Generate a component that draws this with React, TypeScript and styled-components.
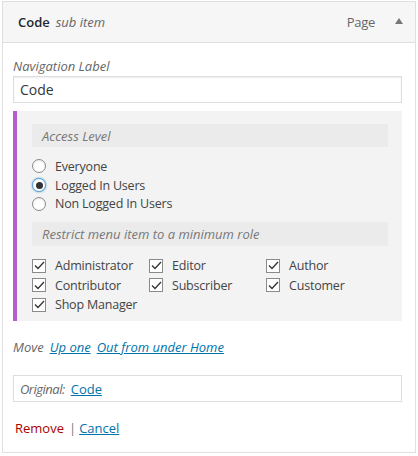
import React from "react";
import styled, { createGlobalStyle } from "styled-components";

const Global = createGlobalStyle`
  html, body { margin: 0; padding: 0; background: #fff; }
  body { font-family: "Open Sans", "Noto Sans", sans-serif; font-size: 13px; color: #444; }
  * { box-sizing: border-box; }
`;

const Page = styled.div`
  padding: 1px 0 0 2px;
  width: 418px;
`;

const Item = styled.div`
  width: 414px;
`;

const Handle = styled.div`
  height: 42px;
  border: 1px solid #dfdfdf;
  background: #f6f6f6;
  display: flex;
  align-items: center;
  padding: 0 12px 0 15px;
`;

const Title = styled.span`
  font-weight: 600;
  color: #23282d;
  font-size: 13px;
`;

const SubTitle = styled.span`
  font-style: italic;
  color: #666;
  margin-left: 6px;
  font-size: 13px;
`;

const TypeLabel = styled.span`
  margin-left: auto;
  color: #666;
  font-size: 13px;
  letter-spacing: -0.3px;
`;

const Arrow = styled.span`
  margin-left: 20px;
  width: 0;
  height: 0;
  border-left: 4px solid transparent;
  border-right: 4px solid transparent;
  border-bottom: 6px solid #777;
  margin-top: -3px;
`;

const Settings = styled.div`
  border: 1px solid #dfdfdf;
  border-top: none;
  padding: 13px 12px 14px 10px;
`;

const FieldLabel = styled.div`
  font-style: italic;
  color: #666;
  line-height: 20px;
  height: 20px;
`;

const TextInput = styled.input`
  display: block;
  width: 389px;
  height: 27px;
  border: 1px solid #ddd;
  box-shadow: inset 0 1px 2px rgba(0,0,0,0.07);
  padding: 0 6px;
  font-family: "Open Sans", sans-serif;
  font-size: 14px;
  color: #32373c;
  outline: none;
`;

const Panel = styled.div`
  margin-top: 8px;
  width: 389px;
  border-left: 4px solid #b25fce;
  background: #f3f3f3;
  padding: 13px 14px 6.5px 15px;
`;

const Bar = styled.div<{ $h: number; $gap?: number }>`
  height: ${(p) => p.$h}px;
  margin-top: ${(p) => p.$gap ?? 0}px;
  background: #ebebeb;
  font-style: italic;
  color: #777;
  display: flex;
  align-items: center;
  padding-left: 10px;
`;

const List = styled.div<{ $cols: number }>`
  margin-top: 10px;
  display: grid;
  grid-template-columns: ${(p) => (p.$cols > 1 ? `repeat(${p.$cols}, 117px)` : "1fr")};
  grid-auto-rows: ${(p) => (p.$cols > 1 ? "19.5px" : "18.7px")};
`;

const Option = styled.label`
  display: flex;
  align-items: center;
  gap: 9px;
  color: #444;
  font-size: 12.5px;
  letter-spacing: -0.2px;
  white-space: nowrap;
`;

const RadioDot = styled.span<{ $on?: boolean }>`
  flex: none;
  width: 14px;
  height: 14px;
  border-radius: 50%;
  border: 1px solid ${(p) => (p.$on ? "#5b9dd9" : "#8a8a8a")};
  background: #fff;
  display: flex;
  align-items: center;
  justify-content: center;
  box-shadow: ${(p) => (p.$on ? "0 0 2px rgba(30,140,190,.8)" : "inset 0 1px 2px rgba(0,0,0,.1)")};
  &::after {
    content: "";
    width: 7px;
    height: 7px;
    border-radius: 50%;
    background: #333;
    display: ${(p) => (p.$on ? "block" : "none")};
  }
`;

const Box = styled.span`
  flex: none;
  width: 14px;
  height: 14px;
  border: 1px solid #8a8a8a;
  background: #fff;
  display: flex;
  align-items: center;
  justify-content: center;
`;

const MoveLine = styled.div`
  margin-top: 16px;
  line-height: 20px;
  height: 20px;
  display: flex;
  gap: 6px;
`;

const Muted = styled.span<{ $tight?: boolean }>`
  font-style: italic;
  color: #666;
  letter-spacing: ${(p) => (p.$tight ? "-0.5px" : "normal")};
`;

const Link = styled.a<{ $italic?: boolean }>`
  color: #0073aa;
  text-decoration: underline;
  font-style: ${(p) => (p.$italic ? "italic" : "normal")};
  cursor: pointer;
`;

const Original = styled.div`
  margin-top: 18px;
  width: 389px;
  height: 27px;
  border: 1px solid #ddd;
  display: flex;
  align-items: center;
  padding-left: 6px;
  gap: 6px;
`;

const Actions = styled.div`
  margin-top: 16px;
  line-height: 20px;
  height: 20px;
  padding-left: 2px;
  display: flex;
  align-items: center;
`;

const Remove = styled.a`
  color: #a00;
  text-decoration: none;
`;

const Sep = styled.span`
  color: #777;
  margin: 0 3px 0 5px;
`;

const Check = () => (
  <Box>
    <svg width="11" height="9" viewBox="0 0 11 9">
      <path d="M1 4.5 L4 7.5 L10 1" fill="none" stroke="#333" strokeWidth="1.3" />
    </svg>
  </Box>
);

const roles = [
  "Administrator",
  "Editor",
  "Author",
  "Contributor",
  "Subscriber",
  "Customer",
  "Shop Manager",
];

export default function App() {
  return (
    <>
      <Global />
      <Page>
        <Item>
          <Handle>
            <Title>Code</Title>
            <SubTitle>sub item</SubTitle>
            <TypeLabel>Page</TypeLabel>
            <Arrow />
          </Handle>
          <Settings>
            <FieldLabel>Navigation Label</FieldLabel>
            <TextInput defaultValue="Code" />
            <Panel>
              <Bar $h={23}>Access Level</Bar>
              <List $cols={1}>
                <Option><RadioDot />Everyone</Option>
                <Option><RadioDot $on />Logged In Users</Option>
                <Option><RadioDot />Non Logged In Users</Option>
              </List>
              <Bar $h={24} $gap={9}>Restrict menu item to a minimum role</Bar>
              <List $cols={3}>
                {roles.map((r) => (
                  <Option key={r}><Check />{r}</Option>
                ))}
              </List>
            </Panel>
            <MoveLine>
              <Muted>Move</Muted>
              <Link $italic>Up one</Link>
              <Link $italic>Out from under Home</Link>
            </MoveLine>
            <Original>
              <Muted $tight>Original:</Muted>
              <Link>Code</Link>
            </Original>
            <Actions>
              <Remove>Remove</Remove>
              <Sep>|</Sep>
              <Link>Cancel</Link>
            </Actions>
          </Settings>
        </Item>
      </Page>
    </>
  );
}
